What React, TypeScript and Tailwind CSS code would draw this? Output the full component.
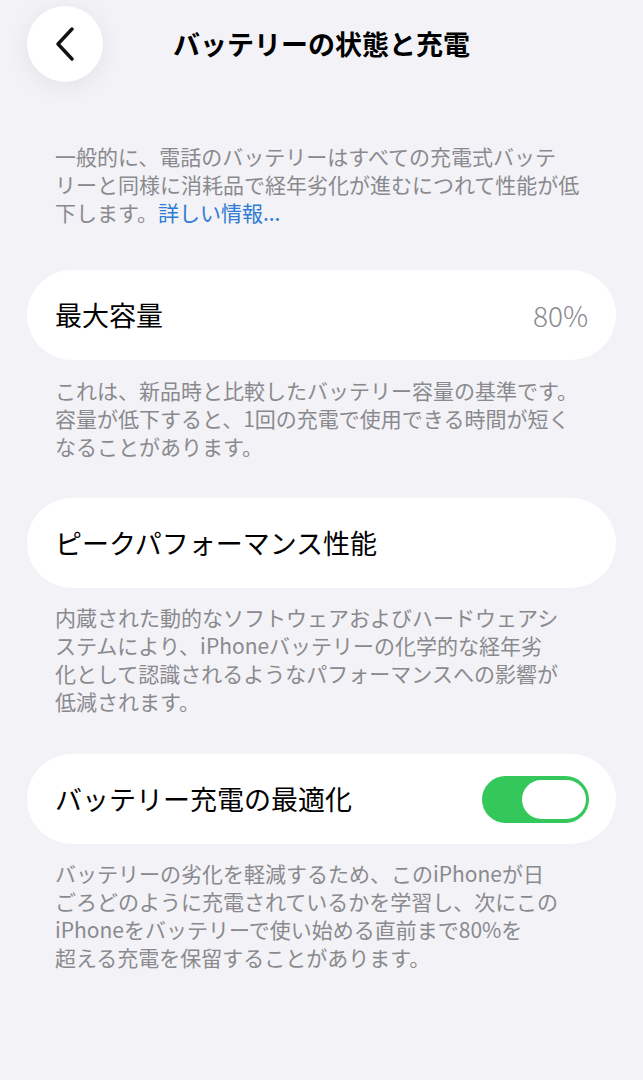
import React, { useState } from "react";

const font = { fontFamily: '"Noto Sans CJK JP", "Noto Sans", sans-serif' };

const Desc: React.FC<{ lines: React.ReactNode[]; className?: string }> = ({ lines, className }) => (
  <div className={`pl-[55px] pr-[20px] text-[21px] leading-[28px] text-[#8a8a8e] ${className ?? ""}`}>
    {lines.map((l, i) => (
      <div key={i} className="whitespace-nowrap">{l}</div>
    ))}
  </div>
);

const Card: React.FC<{ children: React.ReactNode; className?: string }> = ({ children, className }) => (
  <div className={`mx-[27px] h-[90px] rounded-full bg-white flex items-center justify-between pl-[28px] pr-[28px] ${className ?? ""}`}>
    {children}
  </div>
);

export default function App() {
  const [optimized, setOptimized] = useState(true);

  return (
    <div style={font} className="w-[643px] h-[1080px] bg-[#f2f2f7] text-black overflow-hidden">
      {/* header */}
      <div className="relative h-[88px] flex items-center justify-center">
        <button className="absolute left-[27px] top-[6px] w-[76px] h-[76px] rounded-full bg-white shadow-[0_4px_24px_rgba(0,0,0,0.07)] flex items-center justify-center">
          <svg width="22" height="34" viewBox="0 0 22 34" fill="none">
            <path d="M18 2 L4 17 L18 32" stroke="#111" strokeWidth="3.4" strokeLinecap="round" strokeLinejoin="round" />
          </svg>
        </button>
        <h1 className="text-[27px] font-bold">バッテリーの状態と充電</h1>
      </div>

      <Desc
        className="mt-[54px]"
        lines={[
          "一般的に、電話のバッテリーはすべての充電式バッテ",
          "リーと同様に消耗品で経年劣化が進むにつれて性能が低",
          <>
            下します。<span className="text-[#2f7bd3]">詳しい情報...</span>
          </>,
        ]}
      />

      <Card className="mt-[44px]">
        <span className="text-[27px]">最大容量</span>
        <span className="text-[28px] font-light text-[#8a8a8e]">80%</span>
      </Card>
      <Desc
        className="mt-[16px]"
        lines={[
          "これは、新品時と比較したバッテリー容量の基準です。",
          "容量が低下すると、1回の充電で使用できる時間が短く",
          "なることがあります。",
        ]}
      />

      <Card className="mt-[38px]">
        <span className="text-[27px]">ピークパフォーマンス性能</span>
      </Card>
      <Desc
        className="mt-[15px]"
        lines={[
          "内蔵された動的なソフトウェアおよびハードウェアシ",
          "ステムにより、iPhoneバッテリーの化学的な経年劣",
          "化として認識されるようなパフォーマンスへの影響が",
          "低減されます。",
        ]}
      />

      <Card className="mt-[39px]">
        <span className="text-[27px]">バッテリー充電の最適化</span>
        <button
          onClick={() => setOptimized(!optimized)}
          className={`relative -mr-[1px] w-[107px] h-[47px] rounded-full ${optimized ? "bg-[#34c759]" : "bg-[#e5e5ea]"}`}
        >
          <span
            className={`absolute top-[4px] h-[39px] w-[64px] rounded-full bg-white ${optimized ? "right-[3px]" : "left-[3px]"}`}
          />
        </button>
      </Card>
      <Desc
        className="mt-[15px]"
        lines={[
          "バッテリーの劣化を軽減するため、このiPhoneが日",
          "ごろどのように充電されているかを学習し、次にこの",
          "iPhoneをバッテリーで使い始める直前まで80%を",
          "超える充電を保留することがあります。",
        ]}
      />
    </div>
  );
}
